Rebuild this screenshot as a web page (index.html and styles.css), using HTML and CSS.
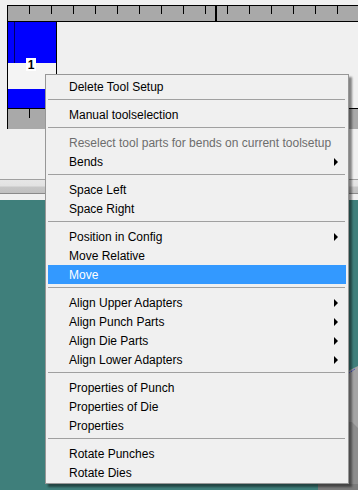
FILE: index.html
```html
<!DOCTYPE html>
<html lang="en">

<head>
    <meta charset="UTF-8">
    <title>Tool Setup</title>
    <link rel="stylesheet" href="styles.css">
</head>

<body>
    <!-- Tool setup area -->
    <div class="stage">
        <div class="ruler ruler-top"></div>
        <div class="tool">
            <div class="tool-upper"><div class="tool-strip"></div></div>
            <div class="tool-gap"></div>
            <div class="tool-lower"></div>
            <span class="tool-label">1</span>
        </div>
        <div class="ruler ruler-bottom"></div>
    </div>

    <!-- Splitter -->
    <div class="splitter"></div>

    <!-- Drawing canvas -->
    <div class="canvas">
        <svg class="canvas-shape" width="40" height="290" viewBox="0 0 40 290">
            <polygon points="28,172 32,170 40,166 40,290 28,290" fill="#a4a4a4" />
            <polygon points="28,222 34,222 40,228 40,290 28,290" fill="#8d8d8d" />
            <polygon points="0,284 40,284 40,290 0,290" fill="#7c7c7c" />
            <polyline points="28,175 31,173 34,171 37,169" stroke="#1a2ccf" stroke-width="1" stroke-dasharray="1 1" fill="none" />
        </svg>
    </div>

    <!-- Context menu -->
    <div class="menu">
        <div class="menu-item">Delete Tool Setup</div>
        <div class="menu-sep"></div>
        <div class="menu-item">Manual toolselection</div>
        <div class="menu-sep"></div>
        <div class="menu-item disabled">Reselect tool parts for bends on current toolsetup</div>
        <div class="menu-item sub">Bends</div>
        <div class="menu-sep"></div>
        <div class="menu-item">Space Left</div>
        <div class="menu-item">Space Right</div>
        <div class="menu-sep"></div>
        <div class="menu-item sub">Position in Config</div>
        <div class="menu-item">Move Relative</div>
        <div class="menu-item active">Move</div>
        <div class="menu-sep"></div>
        <div class="menu-item sub">Align Upper Adapters</div>
        <div class="menu-item sub">Align Punch Parts</div>
        <div class="menu-item sub">Align Die Parts</div>
        <div class="menu-item sub">Align Lower Adapters</div>
        <div class="menu-sep"></div>
        <div class="menu-item">Properties of Punch</div>
        <div class="menu-item">Properties of Die</div>
        <div class="menu-item">Properties</div>
        <div class="menu-sep"></div>
        <div class="menu-item">Rotate Punches</div>
        <div class="menu-item">Rotate Dies</div>
    </div>
</body>

</html>
```

FILE: styles.css
```css
/* Global */
body {
    margin: 0;
    width: 358px;
    height: 490px;
    overflow: hidden;
    position: relative;
    background: #f0f0f0;
    font-family: "Liberation Sans", Arial, sans-serif;
}

/* Tool setup area */
.stage {
    box-sizing: border-box;
    height: 179px;
    padding: 5px 0 0 7px;
}

.ruler {
    box-sizing: border-box;
    background-color: #a9a9a9;
    border-left: 1px solid #000;
}

.ruler-top {
    height: 17px;
    border-top: 1px solid #000;
    border-bottom: 1px solid #000;
    background-image:
        linear-gradient(#000, #000),
        repeating-linear-gradient(to right, transparent 0 21px, #000 21px 22px, transparent 22px 20.75px);
    background-size: 2px 100%, 100% 8px;
    background-position: 207px 0, 0 0;
    background-repeat: no-repeat, repeat-x;
}

.ruler-bottom {
    height: 21px;
    border-top: 1px solid #000;
    background-image: repeating-linear-gradient(to right, transparent 0 21px, #000 21px 22px, transparent 22px 20.75px);
    background-size: 100% 9px;
    background-repeat: no-repeat;
}

.tool {
    position: relative;
    box-sizing: border-box;
    width: 50px;
    height: 86px;
    border-left: 1px solid #000;
    border-right: 1px solid #000;
    background: #f4f4f4;
}

.tool-upper {
    height: 41px;
    background: #0000ff;
}

.tool-strip {
    width: 6px;
    height: 100%;
    border-right: 1px solid #000066;
}

.tool-gap {
    height: 26px;
}

.tool-lower {
    height: 19px;
    background: #0000ff;
}

.tool-label {
    position: absolute;
    left: 18px;
    top: 36px;
    width: 10px;
    height: 13px;
    background: #fff;
    font-size: 12px;
    font-weight: bold;
    line-height: 15px;
    text-align: center;
    color: #000;
}

/* Splitter */
.splitter {
    height: 13px;
    border-top: 1px solid #a0a0a0;
    border-bottom: 1px solid #8a8a8a;
    background: linear-gradient(#e6e6e6 0, #e2e2e2 45%, #c6c6c6 55%, #c0c0c0 100%);
    margin-bottom: 6px;
}

/* Canvas */
.canvas {
    position: relative;
    height: 290px;
    background: #3f7f7b;
}

.canvas-shape {
    position: absolute;
    right: 0;
    top: 0;
}

/* Context menu */
.menu {
    position: absolute;
    left: 45px;
    top: 74px;
    width: 302px;
    padding: 2px 0 1px;
    background: #f0f0f0;
    border: 1px solid #979797;
    box-shadow: 3px 3px 2px rgba(0, 0, 0, 0.45);
    font-family: "Liberation Sans", Arial, sans-serif;
    font-size: 12px;
    color: #000;
}

.menu-item {
    position: relative;
    box-sizing: border-box;
    height: 19px;
    line-height: 19px;
    padding-top: 1px;
    margin: 0 2px;
    padding-left: 21px;
    white-space: nowrap;
}

.menu-item.disabled {
    color: #6d6d6d;
}

.menu-item.active {
    background: #3399ff;
    color: #fff;
}

.menu-item.sub::after {
    content: '';
    position: absolute;
    right: 8px;
    top: 6px;
    border-left: 4px solid #000;
    border-top: 4px solid transparent;
    border-bottom: 4px solid transparent;
}

.menu-sep {
    height: 1px;
    margin: 3px 3px 5px 2px;
    background: #a0a0a0;
}
```
